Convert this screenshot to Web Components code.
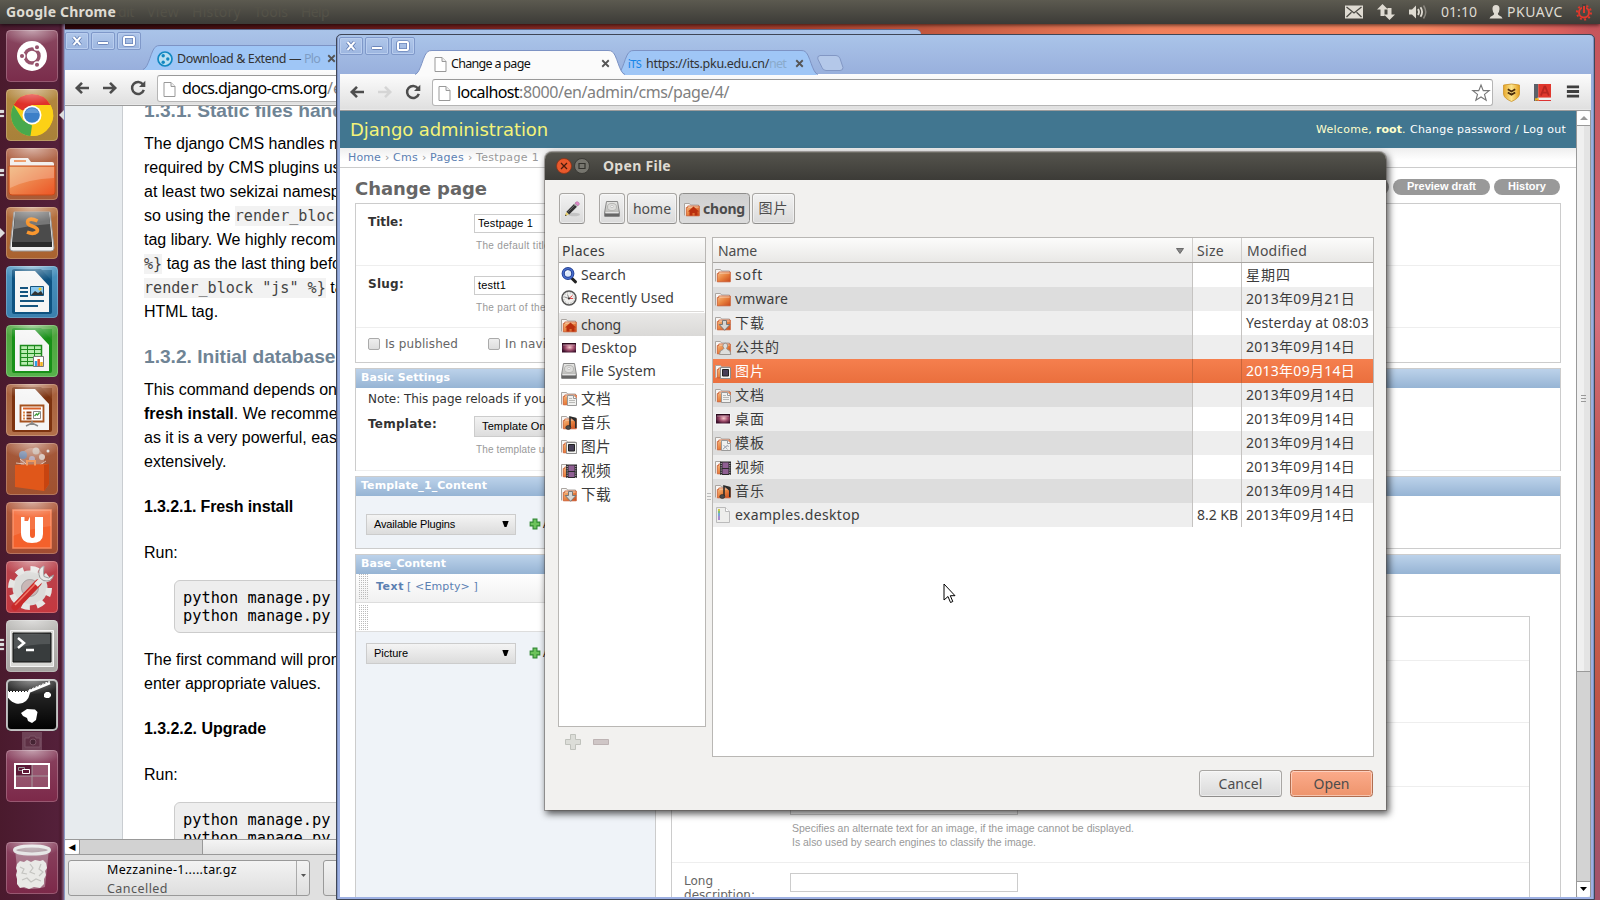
<!DOCTYPE html>
<html lang="en">
<head>
<meta charset="utf-8">
<title>Desktop</title>
<style>
html,body{margin:0;width:1600px;height:900px;overflow:hidden}
body{font-family:"Noto Sans","Noto Sans CJK SC",sans-serif}
</style>
</head>
<body>
<unity-desktop></unity-desktop>
<script>
const define = (name, css, html) => customElements.define(name, class extends HTMLElement {
  connectedCallback() {
    if (this.shadowRoot) return;
    this.attachShadow({mode: 'open'}).innerHTML =
      `<style>:host{display:block;box-sizing:border-box}*{box-sizing:border-box}${css}</style>${html(this)}`;
  }
});
/* text run spread to a given width: t(label, width) */
const t = (s, w, c = '') => `<fit-text w="${w}" class="${c}">${s}</fit-text>`;

/* ---------- small icons ---------- */
const fold = (o = '') => `<defs><linearGradient id="o" x1="0" y1="0" x2="1" y2="1"><stop offset="0" stop-color="#f6bd84"/><stop offset=".5" stop-color="#e8823f"/><stop offset="1" stop-color="#c9481b"/></linearGradient></defs>
<path d="M.5 14.500V2.500h5l1 1.500h8v9" fill="#f8f6f4" stroke="#aaa5a1"/><path d="M2.300 14.800V6.500h1.500V5H15.300V14.800z" fill="url(#o)" stroke="#c8562a" stroke-width=".8"/><path d="M4.200 6h10.500" stroke="#fff" stroke-opacity=".55"/>${o}`;
const page = '<path d="M3 1.500h7l4 4v10H3z" fill="#fff" stroke="#999"/><path d="M10 1.500v4h4" fill="#eee" stroke="#999"/>';
const disk = '<defs><linearGradient id="d" x2="0" y2="1"><stop offset="0" stop-color="#e8e8e6"/><stop offset="1" stop-color="#a9a9a6"/></linearGradient></defs><path d="M2.500.5h11l2 11.500v3q0 .5-.5.5H1q-.5 0-.5-.5V12z" fill="url(#d)" stroke="#888"/><ellipse cx="8" cy="6" rx="4.500" ry="3.600" fill="#dcdcda" stroke="#b6b6b4"/><circle cx="8" cy="5.500" r="1.200" fill="#fff" stroke="#aaa" stroke-width=".6"/><path d="M1 12.200h14v2.800H1z" fill="#666"/><path d="M1.500 11.800h13" stroke="#f5f5f5"/>';
const ICONS = {
  folder: fold(),
  home: fold('<path d="M4 10.500 9.500 5.500l5.500 5h-1.500V14.500h-2.800v-2.500H8.500v2.500H5.500V10.500z" fill="#b92f0e"/>'),
  docs: fold('<path d="M6.500 5.500h6l3 3v7h-9z" fill="#f0f0ee" stroke="#999"/><path d="M12.500 5.500v3h3" stroke="#999" fill="#fff"/><path d="M8 8.500h3M8 10.500h6M8 12.500h6" stroke="#b9b9b7"/>'),
  templ: fold('<path d="M6.500 5.500h6l3 3v7h-9z" fill="#f0f0ee" stroke="#999"/><path d="M12.500 5.500v3h3" stroke="#999" fill="#fff"/><path d="m8 14 5-4M8.500 10l4 4.500M8 14.500q3-5 6-3" stroke="#a8adb8" fill="none"/>'),
  music: fold('<path d="M9 13V3l5.800 1.500V14" fill="none" stroke="#2c2c2c" stroke-width="1.600"/><path d="M9 3l5.500 5V4.500z" fill="#2c2c2c"/><ellipse cx="7.300" cy="13.500" rx="2.500" ry="2" fill="#4a4a4a" stroke="#222" stroke-width=".6"/>'),
  pics: fold('<path d="M5.500 4.500h10v11h-10z" fill="#f4f4f2" stroke="#8c8c8c"/><path d="M7.500 6.500h6v6.500h-6z" fill="#473f57" stroke="#222"/>'),
  video: fold('<path d="M5 2.500h11v13.500H5z" fill="#2d2a2d"/><path d="M7.500 3.500h6v5.500h-6zM7.500 10h6v5h-6z" fill="#8f5f93"/><path d="M6.200 4v12M14.800 4v12" stroke="#ddd" stroke-width=".9" stroke-dasharray="1 1.200"/>'),
  down: fold('<path d="M7.500 5.500h4V9.500H15l-5.400 5.800L4.200 9.500h3.300z" fill="#d6d6d4" stroke="#777"/>'),
  pub: fold('<path d="M4.500 15.500q0-4.500 3.500-5l1-1.200Q7.500 8 8 6q.6-1.800 2.300-1.800T12.500 6q.4 2-1 3.300l.8 1.200q3.500.5 3.500 5z" fill="#dededc" stroke="#8a8a88" stroke-width=".8"/>'),
  desk: '<defs><radialGradient id="k" cx=".55" cy=".45" r=".6"><stop offset="0" stop-color="#f6c9cc"/><stop offset=".5" stop-color="#a4506f"/><stop offset="1" stop-color="#3a0f2a"/></radialGradient></defs><path d="M.5 2.500h15v11H.5z" fill="#fff" opacity=".8"/><path d="M1 3h14v9.500H1z" fill="url(#k)"/><path d="M1 3h14v1.300H1z" fill="#2c0a1c"/><path d="M2 5h12" stroke="#fff" stroke-opacity=".6" stroke-width=".7"/>',
  disk,
  file: '<path d="M1.500.5h9l4 4v11h-13z" fill="#eeeeec" stroke="#bbb"/><path d="M10.500.5v4h4" fill="#fff" stroke="#bbb"/><path d="M4 2v2" stroke="#c9c94a" stroke-width="2"/><path d="M4 4v2" stroke="#7ec07e" stroke-width="2"/><path d="M4 6v3" stroke="#7aa6d8" stroke-width="2"/><path d="M4 9v4" stroke="#a58bd0" stroke-width="2"/>',
  search: '<path d="m10.500 11 4 3.800" stroke="#222" stroke-width="3" stroke-linecap="round"/><circle cx="7" cy="6.500" r="4.800" fill="#dce8fa" stroke="#223f91" stroke-width="3.200"/><circle cx="7" cy="6.500" r="4.900" fill="none" stroke="#4a6fcf" stroke-width="1.400"/><path d="M4.500 6Q5 4 7.300 3.800" stroke="#fff" fill="none"/>',
  recent: '<circle cx="8" cy="8" r="7" fill="#f0f0ee" stroke="#555" stroke-width="1.500"/><circle cx="8" cy="8" r="5.300" fill="none" stroke="#999" stroke-dasharray="1 1.800"/><path d="M8 8.500 3.500 7M8 8.500l-1.500-4" stroke="#888" stroke-width="1"/><path d="m7.500 9 4-3.500M8 8.500h4" stroke="#d33" stroke-width=".9"/><circle cx="8" cy="8.500" r="1" fill="#333"/>',
  pencil: '<ellipse cx="10" cy="13.500" rx="6" ry="1.800" fill="#000" opacity=".13"/><path d="M1 15l1.200-4L5 13.500z" fill="#e9cf6a"/><path d="M1 15l.5-1.600 1.200 1z" fill="#222"/><path d="M2.400 10.800 10 3l3 2.800-7.800 7.800z" fill="#333"/><path d="m3.800 11 7.200-7" stroke="#6a6a6a"/><path d="m10 3 1-1 3 2.800-1 1z" fill="#b8b8b8"/><path d="m11 2 1.200-1q1.200-.8 2.400.4t.4 2.400l-1 1z" fill="#e08ac8" stroke="#a05a92" stroke-width=".5"/>',
  page,
  close: '<path d="m4 4 8 8m0-8-8 8" stroke="#555" stroke-width="2.200"/>',
  back: '<path d="M15 8H3M8 2.800 2.800 8 8 13.200" fill="none" stroke="#4d4d4d" stroke-width="2.600"/>',
  fwd: '<path d="M1 8h12M8 2.800 13.200 8 8 13.200" fill="none" stroke="#4d4d4d" stroke-width="2.600"/>',
  fwd0: '<path d="M1 8h12M8 2.800 13.200 8 8 13.200" fill="none" stroke="#d5d5d5" stroke-width="2.600"/>',
  reload: '<path d="M13 4.500A6 6 0 1 0 13.800 9.800" fill="none" stroke="#4d4d4d" stroke-width="2.500"/><path d="M15.300.8V7H9z" fill="#4d4d4d"/>',
  plone: '<circle cx="8" cy="8" r="7" fill="#b9dff2" stroke="#1288c2" stroke-width="1.700"/><circle cx="6.200" cy="4.800" r="1.700" fill="#1288c2"/><circle cx="10.800" cy="8" r="1.700" fill="#1288c2"/><circle cx="6.200" cy="11.200" r="1.700" fill="#1288c2"/>',
  add: '<path d="M5.800 2.500h4.400v3.300h3.300v4.400h-3.300v3.300H5.800v-3.300H2.500V5.800h3.300z" fill="#6cc35b" stroke="#328a34" stroke-width="1.300"/>',
  plus: '<path d="M5.500.5h5v5h5v5h-5v5h-5v-5h-5v-5h5z" fill="#dcddd8" stroke="#c0c2bc"/>',
  minus: '<path d="M.5 5.500h15v5H.5z" fill="#cfc6c6" stroke="#bdb3b3"/>',
  star: '<path d="m8 .9 2 5h5.300l-4.200 3.300 1.500 5.300L8 11.500l-4.600 3 1.500-5.300L.7 5.900H6z" fill="#fff" stroke="#777"/>',
  shield: '<defs><linearGradient id="s"><stop offset="0" stop-color="#e8a92c"/><stop offset=".5" stop-color="#fbe38c"/><stop offset="1" stop-color="#e59f1c"/></linearGradient></defs><path d="M.5 1Q8-1 15.500 1v8.500Q15 13.500 8 16.500.8 13.500.5 9.500z" fill="url(#s)" stroke="#c98d20" stroke-width=".7"/><path d="M4.500 5 8 7l3.500-2M4.500 8 8 10l3.500-2" fill="none" stroke="#4a2c0a" stroke-width="1.700"/>',
  book: '<path d="M0 0h4v16H0z" fill="#5b6168"/><path d="M4 0h12v13H4z" fill="#e0372d"/><path d="M3 13h13v2.500H3z" fill="#eee"/><path d="M3 15.500h13" stroke="#d33"/><path d="M1 13.500h3.500V16L3 15l-2 1z" fill="#f2b51d"/><path d="m6.500 11 3.300-8.500h.8L14 11M7.800 8.200h5" stroke="#b82620" stroke-width="1.700" fill="none"/>',
  menu: '<path d="M2 3h13M2 8h13M2 13h13" stroke="#3f3f3f" stroke-width="3"/>',
  mail: '<path d="M0 1.500h18v13H0z" fill="#dfdbd2"/><path d="m1.500 3 7.500 6 7.500-6M1.500 13l5-4.800M16.500 13l-5-4.800" fill="none" stroke="#4a4943" stroke-width="1.300"/>',
  net: '<path d="M5.500 0 11 5.500H7.500V12h-4V5.500H0zM12.500 16 7 10.500h3.500V4h4v6.500H18z" fill="#dfdbd2"/>',
  vol: '<path d="M0 5.500h3l4-4v13l-4-4H0z" fill="#dfdbd2"/><path d="M9 5q2 3 0 6M11.500 3.300q3.200 4.700 0 9.400" fill="none" stroke="#dfdbd2" stroke-width="1.800"/><path d="M14.500 1.500q4.500 6.500 0 13" fill="none" stroke="#8b8880" stroke-width="1.500"/>',
  user: '<path d="M7 0q3.800 0 3.800 4.200Q10.500 7.500 9 9q0 1.800 1.500 2.200 3 .8 3.500 3.300H0q.5-2.500 3.500-3.300Q5 10.800 5 9 3.500 7.500 3.200 4.200 3.200 0 7 0z" fill="#dfdbd2"/>',
  power: '<circle cx="8" cy="8.500" r="5" fill="none" stroke="#df382c" stroke-width="2"/><circle cx="8" cy="8.500" r="7" fill="none" stroke="#df382c" stroke-width="2" stroke-dasharray="2 2.400"/><path d="M6 0h4v6H6z" fill="#45443f"/><path d="M8 2v7" stroke="#df382c" stroke-width="2"/>',
};
define('ui-icon', 'svg{display:block;width:100%;height:100%;overflow:visible}', e => {
  const n = e.getAttribute('name'), w = +(e.getAttribute('w') || 16), h = +(e.getAttribute('h') || w);
  e.style.cssText += `;width:${w}px;height:${h}px;flex:none`;
  const vb = {mail: '0 0 18 16', net: '0 0 18 16', vol: '0 0 20 16', user: '0 0 14 15'}[n] || '0 0 16 16';
  return `<svg viewBox="${vb}" fill="none">${ICONS[n]}</svg>`;
});
const ic = (n, w = 16, c = '') => `<ui-icon name="${n}" w="${w}" class="${c}"></ui-icon>`;

/* ---------- top panel ---------- */
define('top-panel', `:host{height:24px;display:flex;align-items:center;background:linear-gradient(#5c5a50,#3c3b37);color:#dfdbd2;font-size:14px;line-height:24px;padding-left:6px;position:relative;z-index:1;box-shadow:0 1px 4px rgba(0,0,0,.7)}
.b{font-weight:700;font-size:14px}.m{color:#545248;margin-left:2px}.m+.m{margin-left:13px}.r{margin-left:auto;display:flex;align-items:center}`,
() => `${t('Google Chrome', 110, 'b')}${t('dit', 16, 'm')}${t('View', 32, 'm')}${t('History', 49, 'm')}${t('Tools', 34, 'm')}${t('Help', 28, 'm')}
<div class="r">${ic('mail', 18)}<ui-icon name="net" w="18" h="16" style="margin-left:14px"></ui-icon><ui-icon name="vol" w="20" h="16" style="margin-left:14px"></ui-icon>
<fit-text w="36" style="margin-left:12px">01:10</fit-text><ui-icon name="user" w="14" h="14" style="margin-left:12px"></ui-icon><fit-text w="56" style="margin:0 13px 0 4px">PKUAVC</fit-text><ui-icon name="power" w="16" style="margin-right:8px"></ui-icon></div>`);

/* ---------- launcher ---------- */
const officeDoc = (c, inner) => `<path d="M9 3h26l11 12v31q0 2-2 2H8q-2 0-2-2V5q0-2 3-2z" fill="${c}"/><path d="M9 5h20l14 15v26H9z" fill="#f5f5f5"/><path d="M33 4h13v13z" fill="${c}" opacity=".8"/>${inner}`;
const APPS = {
  dash: ['#8b4a62', '#7a2c4b', '<circle cx="26" cy="26" r="15" fill="#fff"/><circle cx="26" cy="26" r="7" fill="none" stroke="#96546d" stroke-width="3.500"/><g stroke="#fff" stroke-width="1.500"><circle cx="16" cy="26" r="2.800" fill="#96546d"/><circle cx="31" cy="17.300" r="2.800" fill="#96546d"/><circle cx="31" cy="34.700" r="2.800" fill="#96546d"/></g>'],
  chrome: ['#b3873f', '#a88139', '<circle cx="26" cy="26" r="21" fill="#fcd116"/><path d="M26 5A21 21 0 0 1 44.500 16H26L16.500 21.500 7.600 16Q13.500 5 26 5z" fill="#e0312a"/><path d="M7.600 16 16.900 31.300 26 36.500 24.500 47A21 21 0 0 1 7.600 16z" fill="#48a94c"/><path d="M26 16h18.600A21 21 0 0 1 24.500 47L35 31z" fill="#fcd116"/><circle cx="26" cy="26" r="9.500" fill="#fff"/><circle cx="26" cy="26" r="7.800" fill="#3c7fc8"/><path d="M19 24a7.500 7.500 0 0 1 14 0z" fill="#7cabe0" opacity=".6"/>'],
  files: ['#b3694d', '#a85a36', '<path d="M4 20V12q0-2 2-2h16l3 4h21q2 0 2 2v5z" fill="#f2f0ee"/><path d="M8 12h12v2H8z" fill="#ed9a68"/><path d="M3 18h46v26q0 3-3 3H6q-3 0-3-3z" fill="url(#g2)" stroke="#c94a18"/><path d="M4 19h44v11Q22 31 4 40z" fill="#fff" opacity=".22"/>'],
  sublime: ['#b5703f', '#a9622f', '<path d="M8 5h36l4 36q0 3-3 3H7q-3 0-3-3z" fill="#eee" stroke="#999"/><path d="M9 5h34l3 30H6z" fill="#4b4b4b"/><path d="M9 5h34l1 12Q26 18 8 22z" fill="#777"/><path d="M6 35h40v5H6z" fill="#2a2a2a"/><path d="M31.500 14q-7-3.500-9.500-.5-2 3.500 4 5.500 7 2.300 5 5.700-3.500 3.200-10 .5" fill="none" stroke="#f9972f" stroke-width="3.600"/>'],
  writer: ['#4a93bf', '#3a7fae', officeDoc('#0e5280', '<path d="M14 22h8M14 26h8M14 30h8M14 35h24M14 40h18" stroke="#15547f" stroke-width="2"/><path d="M24.500 20.500h13v9h-13z" fill="#8bc8ee" stroke="#15547f"/><path d="m25 29 4-4 3 2 3-2 2.500 4z" fill="#333"/><circle cx="34" cy="23" r="1.500" fill="#f5c518"/>')],
  calc: ['#4da23c', '#57b24b', officeDoc('#189018', '<path d="M14.500 20.500h21v20h-21z" fill="#b9ecb0" stroke="#1e8a1e" stroke-width="1.500"/><path d="M14.500 24.500h21M14.500 28.500h21M14.500 32.500h21M14.500 36.500h21M21.500 20v20M28.500 20v20" stroke="#1e8a1e"/><path d="M27.500 31.500h10v10h-10z" fill="#fff" stroke="#777"/><path d="M30 41v-5" stroke="#2d9fe8" stroke-width="2.500"/><path d="M32.700 41v-7" stroke="#e4572e" stroke-width="2.500"/><path d="M35.500 41v-4" stroke="#f0b41c" stroke-width="2.500"/>')],
  impress: ['#a65e3a', '#b2704a', officeDoc('#7c3310', '<path d="M14.500 21.500h23v16h-23z" fill="#fff" stroke="#a5521e" stroke-width="1.800"/><path d="M17 24.500h18" stroke="#d8622a" stroke-width="2"/><path d="M17 28.500h2M17 31.500h2M17 34.500h2" stroke="#e08a4a" stroke-width="2"/><path d="M20.500 28.500h5M20.500 31.500h5M20.500 34.500h5" stroke="#8a3a12" stroke-width="2"/><path d="M27.500 27.500h7v7h-7z" fill="#fff" stroke="#888"/><path d="m28.500 32 2-2 1 1 2-2.500" stroke="#3a9c3a" fill="none" stroke-width="1.300"/><path d="m20 42 6-3 6 3M26 37v4" stroke="#888" stroke-width="1.500" fill="none"/>')],
  center: ['#a5593b', '#a0512f', '<circle cx="26" cy="17" r="12" fill="#fff" opacity=".25"/><circle cx="17" cy="12" r="4" fill="#7c8fae"/><circle cx="30" cy="8" r="3.500" fill="#c9b5a9"/><circle cx="36" cy="14" r="3" fill="#d9c9c0"/><circle cx="26" cy="16" r="3" fill="#b9b0c0"/><circle cx="42" cy="8" r="1.500" fill="#ddd"/><path d="M10 20l8 1M40 18l-6 4M14 16l6 5" stroke="#fff" stroke-opacity=".6"/><path d="M9 22 43 21v20l-5 7-29-4z" fill="#e0571a"/><path d="m38 22 5-1v20l-5 7z" fill="#c74410"/><path d="M21 22.500v-4.500h8v4.500" fill="none" stroke="#f39a5c" stroke-width="2"/>'],
  one: ['#b05a3c', '#a24d32', '<path d="M7 8h38v38H7z" fill="#f4612c" stroke="#f9885c" stroke-width="1.500"/><path d="M7 8h38v16Q25 26 7 34z" fill="#fff" opacity=".12"/><path d="M15 15h9v18q0 3 2.500 3t2.500-3V15h8v17q0 9-11 9-11 0-11-10z" fill="#fff"/><path d="M18.500 14.500h5.500l-2 4.500h-3.500z" fill="#f4703f"/>'],
  settings: ['#b8444e', '#c4383f', '<circle cx="24" cy="27" r="13" fill="none" stroke="#dcdcda" stroke-width="9"/><circle cx="24" cy="27" r="19" fill="none" stroke="#e6e6e4" stroke-width="6" stroke-dasharray="8 6.900"/><circle cx="24" cy="27" r="8.500" fill="#c9b7b6" stroke="#aaa"/><path d="M9 46 32 22" stroke="#c92a2a" stroke-width="7" stroke-linecap="round"/><path d="M9 44 30 22" stroke="#f07a6a" stroke-width="1.500"/><path d="M30 24 37 17" stroke="#e8e8e6" stroke-width="5"/><path d="M38 5q-6 2-5 8.500T41 20q5 0 6.500-6l-5 3-4.500-1.500-.5-4.500z" fill="#e8e8e6" stroke="#999"/>'],
  term: ['#bdbcb9', '#a7a5a2', '<path d="M4.500 10.500h43v36h-43z" fill="#d9d9d6" stroke="#f4f4f4"/><path d="M7 13h38v29H7z" fill="#383c3d" stroke="#111"/><path d="M8 14h36v10Q24 24 8 29z" fill="#fff" opacity=".13"/><path d="m12 18 6 5-6 5" fill="none" stroke="#fff" stroke-width="2.500"/><path d="M20 30h8" stroke="#fff" stroke-width="2.500"/>'],
  cave: ['#333', '#000', '<path d="M2 12h21l1 2q-1 5-4 8-4 3.500-10 2.500-5-1.500-8-6z" fill="#fff"/><path d="M3 12.500h20" stroke="#000" stroke-width="1" stroke-dasharray="1 2"/><path d="m22 13 22-9" stroke="#fff" stroke-width="2.500"/><path d="m23 11 21-9" stroke="#fff" stroke-width="1" stroke-dasharray="2 1.500"/><path d="M38 15l2-2h3l2 2v2l-2 2h-3l-2-1zM15 34l6-4 8 .5 2.500 2.500-1.500 8-4 3-4-2-1-3-4-2z" fill="#fff"/><rect x="1" y="1" width="50" height="50" rx="4" fill="none" stroke="#b4b4b4" stroke-width="2"/>'],
  spaces: ['#8a4360', '#7c2949', '<path d="M9 14h34v24H9z" fill="#fff" fill-opacity=".15"/><path d="M9 14h17v12H9z" fill="#5e1a38"/><path d="M26 15v22M10 26h32" stroke="#a59a9e"/><path d="M12.500 17.500h6v3h-6z" stroke="#999" fill="none"/><path d="M16.500 19.500h7v4h-7z" fill="#5e1a38" stroke="#fff"/><path d="M9 14h34v24H9z" fill="none" stroke="#fff" stroke-width="2"/>'],
  trash: ['#8a4360', '#7c2949', '<path d="M9 7h34l-4 38q-13 4-26 0z" fill="#d8c8cf" opacity=".45"/><ellipse cx="26" cy="8" rx="17.500" ry="4" fill="#a9959d" stroke="#e3e3e3" stroke-width="3"/><path d="M11 22l3-3 4 1 3-2 4 2 4-2 5 1 3-1 3 3 1 5-2 3 1 4-2 4v5l-4 4-6-1-5 2-5-2-4 1-3-4v-5l-1-4 1-4-1-3z" fill="#e9e9e6"/><path d="m14 25 4 2-2 4 5 1M24 22l3 4-3 4 5 2M35 22l-2 5 4 3-4 4M16 38l5-2 4 4 5-3 5 2" stroke="#c4c4c0" fill="none" stroke-width="1.200"/>'],
};
define('launcher-tile', `:host{width:52px;height:52px;flex:none;position:relative}svg{display:block}
.p{position:absolute;left:-6px;width:4px;height:2.500px;background:#ddd;border-radius:0 1px 1px 0;box-shadow:0 0 1px #fff}.tr{position:absolute;left:-6px;top:21px;border:5px solid transparent;border-left:5px solid #ddd;border-right:0}.now{position:absolute;left:53px;top:21px;border:5px solid transparent;border-right:5px solid #ddd;border-left:0}`,
e => {
  const [a, b, g] = APPS[e.getAttribute('app')], n = +e.getAttribute('pips') || 0;
  let p = '';
  if (n === 1) p = '<i class="tr"></i>';
  else for (let i = 0; i < n; i++) p += `<i class="p" style="top:${26.500 - n * 2.250 + i * 4.500 - 1}px"></i>`;
  if (e.hasAttribute('now')) p += '<i class="now"></i>';
  return `<svg width="52" height="52" viewBox="0 0 52 52"><defs><linearGradient id="g" x2="0" y2="1"><stop offset="0" stop-color="${a}"/><stop offset="1" stop-color="${b}"/></linearGradient><linearGradient id="g2" x2="1" y2="1"><stop offset="0" stop-color="#efb070"/><stop offset="1" stop-color="#ec5424"/></linearGradient><radialGradient id="h" cx=".5" cy="0" r=".6"><stop offset="0" stop-color="#fff" stop-opacity=".5"/><stop offset="1" stop-color="#fff" stop-opacity="0"/></radialGradient></defs>
<rect width="52" height="52" rx="4.500" fill="url(#g)"/>${g}<rect width="52" height="26" rx="4.500" fill="url(#h)"/><rect x=".5" y=".5" width="51" height="51" rx="4" fill="none" stroke="#fff" stroke-opacity=".22"/></svg>${p}`;
});
define('unity-launcher', `:host{width:65px;height:876px;background:linear-gradient(90deg,#4a1a2d,#54203a 58px,#4b1a2f 61px,#7b4f6b 63px,#8a86b0);display:flex;flex-direction:column;padding:6px 0 0 6px;gap:7px}.cam{margin:-6px 0 -8px 16px;width:20px;height:19px;opacity:.35;display:block}.end{margin-top:33px}`,
() => `${[['dash'], ['chrome', 'pips="2" now'], ['files', 'pips="2"'], ['sublime', 'pips="1"'], ['writer'], ['calc'], ['impress'], ['center'], ['one'], ['settings'], ['term', 'pips="3"'], ['cave']].map(([a, x = '']) => `<launcher-tile app="${a}" ${x}></launcher-tile>`).join('')}
<svg class="cam" viewBox="0 0 20 19"><path d="M0 0h20v19H0z" fill="#a98a98"/><path d="M3 6h4l1-2h5l1 2h4v9H3z" fill="#7b5566" stroke="#c9b5bd"/><circle cx="11" cy="10" r="3" fill="#333" stroke="#c9b5bd"/></svg>
<launcher-tile app="spaces"></launcher-tile><launcher-tile app="trash" class="end"></launcher-tile>`);

/* ---------- browser chrome ---------- */
define('window-buttons', `:host{display:flex;gap:2px}i{width:24px;height:18px;border:1px solid #7f98c9;border-radius:2px;background:linear-gradient(#b0c7ea,#9db6e0);box-shadow:inset 0 0 0 1px #b9cdee}svg{display:block}`,
() => ['<path d="m7.500 4 7 8m0-8-7 8" stroke="#5c77ad" stroke-width="3.500"/><path d="m7.500 4 7 8m0-8-7 8" stroke="#fff" stroke-width="2"/>', '<rect x="5.500" y="8.500" width="11" height="3" rx="1" fill="#fff" stroke="#6c86bb"/>', '<rect x="6" y="4" width="10" height="8" rx="1.500" fill="none" stroke="#6c86bb" stroke-width="3.600"/><rect x="6" y="4" width="10" height="8" rx="1" fill="none" stroke="#fff" stroke-width="2"/>'].map(p => `<i><svg width="22" height="16" fill="none">${p}</svg></i>`).join(''));

define('browser-tab', `:host{height:25px;position:relative;display:flex;align-items:center;font-size:12.500px;line-height:20px;color:var(--ink,#333);padding-left:var(--pad,28px)}
svg{position:absolute;inset:0;width:100%;height:100%;overflow:visible}slot{display:flex;align-items:center}.in{position:relative;display:flex;align-items:center;width:100%;padding-top:2px}`,
e => { const w = +e.getAttribute('w'), f = e.hasAttribute('active') ? '#fbfbfb' : '#9fc6f6'; e.style.width = w + 'px';
  return `<svg viewBox="0 0 ${w} 25" preserveAspectRatio="none"><path d="M0 25C6 23 8 4 13 1.500q1-1 4-1H${w - 17}q3 0 4 1C${w - 8} 4 ${w - 6} 23 ${w} 25z" fill="${f}"/><path d="M0 24.500C6 23 8 4 13 1.500q1-1 4-1H${w - 17}q3 0 4 1C${w - 8} 4 ${w - 6} 23 ${w} 24.500" fill="none" stroke="#7d93c4"/></svg><div class="in"><slot></slot></div>`; });

define('tool-bar', `:host{height:37px;background:linear-gradient(#fcfcfc,#dfdfdf);border-bottom:1px solid #9c9c9c;box-shadow:inset 0 -1px #e8e8e8;display:flex;padding:5px 0 0 0;font-size:16px}
.nav{display:flex;gap:12px;padding:5px 0 0 9px;width:92px;flex:none}.box{height:27px;width:var(--box,1061px);flex:none;background:#fff;border:1px solid #b5b5b5;border-top-color:#999;border-radius:3px;display:flex;align-items:center;line-height:25px;padding-left:3px;gap:5px;color:#808080}.star{margin:0 2px 0 auto}.ext{display:flex;gap:14px;padding:5px 0 0 10px}`,
e => `<div class="nav">${ic('back')}${ic(e.hasAttribute('nofwd') ? 'fwd0' : 'fwd')}${ic('reload')}</div><div class="box">${ic('page', 16)}<slot></slot>${e.hasAttribute('ext') ? ic('star', 18, 'star') : ''}</div>${e.hasAttribute('ext') ? `<div class="ext">${ic('shield', 17)}${ic('book', 17)}${ic('menu', 15)}</div>` : ''}`);

/* ---------- documentation window ---------- */
define('docs-page', `:host{display:flex;height:733px;overflow:hidden;background:#fff;font:16px/24px "Liberation Sans",sans-serif;color:#000;white-space:nowrap}
.g{width:58px;flex:none;background:#e7ebee;border-right:1px solid #c9cdd1}.c{padding-left:21px;margin-top:-7px}
h2{font-size:19.150px;line-height:24px;margin:0;color:#6f8495}p{margin:0}h3{font-size:16px;line-height:24px;margin:0}
code{font:15.100px "DejaVu Sans Mono",monospace;background:#f2f2f2;color:#444;padding:1px 0}
pre{font:15.300px/18px "DejaVu Sans Mono",monospace;margin:0 0 0 30px;background:#eee;border:1px solid #ccc;border-radius:6px;padding:8px;height:53px;width:500px}`,
() => `<div class="g"></div><div class="c">
<h2>1.3.1. Static files hand</h2>
<p style="margin-top:9px">The django CMS handles m<br>required by CMS plugins us<br>at least two sekizai namesp<br>so using the <code>render_block</code><br>tag libary. We highly recom<br><code>%}</code> tag as the last thing befo<br><code>render_block "js" %}</code> ta<br>HTML tag.</p>
<h2 style="margin-top:21px">1.3.2. Initial database</h2>
<p style="margin-top:9px">This command depends on<br><b>fresh install</b>. We recommen<br>as it is a very powerful, easy<br>extensively.</p>
<h3 style="margin-top:21px">${t('1.3.2.1. Fresh install', 149)}</h3>
<p style="margin-top:22px">Run:</p>
<pre style="margin-top:15px">python manage.py
python manage.py</pre>
<p style="margin-top:15px">The first command will prom<br>enter appropriate values.</p>
<h3 style="margin-top:21px">${t('1.3.2.2. Upgrade', 122)}</h3>
<p style="margin-top:22px">Run:</p>
<pre style="margin-top:15px">python manage.py
python manage.py</pre></div>`);

define('docs-window', `:host{width:857px;height:871px;background:linear-gradient(#aac4e9,#98afdc 40px);border-top:1px solid #5d6c92;border-left:1px solid #8a99c4;border-radius:0 5px 0 0;overflow:hidden}
.t{height:40px;display:flex;padding:2px 0 0 0}browser-tab{margin:13px 0 0 2px;--pad:14px}.fade{color:#7d9cc4}
.u{color:#000}.sb{height:16px;display:flex;background:linear-gradient(#f4f4f4,#e4e4e4);border-top:1px solid #999;border-bottom:1px solid #999}.sb b{width:14px;background:#fff;border-radius:3px;font:9px/14px "DejaVu Sans";text-align:center}.sb i{width:124px;background:#d2d2d2;border:solid #999;border-width:0 1px}
.dl{height:46px;background:#e0e0e0;display:flex;gap:13px;padding:5px 3px;font-size:12.500px;line-height:18px}.it{width:242px;height:36px;border:1px solid #999;border-radius:3px;background:linear-gradient(#f3f3f3,#dedede);display:flex}.tx{padding-left:38px;width:228px;border-right:1px solid #aaa;display:flex;flex-direction:column;line-height:18.500px}.tx .g{color:#555}.it svg{margin:13px 0 0 4px}`,
() => `<div class="t"><window-buttons></window-buttons><browser-tab w="220">${ic('plone')}<fit-text w="124" style="margin-left:4px">Download &amp; Extend —</fit-text><fit-text w="16" class="fade" style="margin-left:3px">Plo</fit-text><ui-icon name="close" w="13" style="margin-left:5px"></ui-icon></browser-tab></div>
<tool-bar style="height:36px">${t('docs.django-cms.org', 145, 'u')}<span style="margin-left:-5px">/en</span></tool-bar><docs-page></docs-page>
<div class="sb"><b>◀</b><i></i></div><div class="dl"><div class="it"><div class="tx">${t('Mezzanine-1.....tar.gz', 130)}${t('Cancelled', 61, 'g')}</div><svg width="6" height="4"><path d="M0 0h5L2.500 3z" fill="#555"/></svg></div><div class="it"></div></div>`);

/* ---------- admin page ---------- */
define('admin-module', `:host{border:1px solid #ccc;margin-bottom:5px;background:#fff}h2{margin:0;height:19px;background:linear-gradient(#bcd2ea,#96b4d4);color:#fff;font-size:11px;line-height:17px;padding-left:5px;display:flex}`,
e => (e.getAttribute('head') ? `<h2>${t(e.getAttribute('head'), e.getAttribute('hw'))}</h2>` : '') + '<slot></slot>');
define('form-row', `:host{display:flex;border-bottom:1px solid #eee;height:62px;padding:10px 0 0 12px}
.l{width:106px;font-size:12px;line-height:18px;font-weight:700;color:#333;margin-top:-1px}.i{display:block;width:250px;height:19px;border:1px solid #ccc;font:11px/17px "Liberation Sans",sans-serif;color:#000;padding-left:3px}.sel{height:21px;background:linear-gradient(#f2f2f2,#ddd);line-height:19px;padding-left:7px}.h{font:10px/14px "Liberation Sans",sans-serif;color:#999;padding:6px 0 0 2px;display:block}`,
e => { const g = n => e.getAttribute(n); return `<div class="l">${t(g('label'), g('lw'))}</div><div><span class="i ${g('kind') || ''}">${t(g('value'), g('vw'))}</span><span class="h">${t(g('help'), g('hw'))}</span></div>`; });
define('plugin-select', `:host{display:flex;align-items:center;font:11px "Liberation Sans",sans-serif;height:21px}.s{width:150px;height:21px;border:1px solid #ccc;background:linear-gradient(#f4f4f4,#dcdcdc);padding:0 6px 0 7px;line-height:19px;display:flex;justify-content:space-between}.a{font:10px "DejaVu Sans"}ui-icon{margin:0 1px 2px 12px}svg{margin-top:6px}`,
e => `<div class="s">${t(e.getAttribute('label'), e.getAttribute('lw'))}<svg width="7" height="7"><path d="M.3 0h6.400L4.500 6h-2z" fill="#000"/></svg></div>${ic('add', 14)}<span class="a">Add</span>`);

define('admin-page', `:host{width:1236px;height:786px;overflow:hidden;background:#fff;font:11px "DejaVu Sans",sans-serif;position:relative}
.hd{height:37px;background:#417690;display:flex;justify-content:space-between;align-items:center;padding:0 10px 0 10px;color:#ffc}.hd .n{font-size:18px;color:#f4f379}.w{color:#fff}.hd span{display:flex;align-items:baseline}.hd b{margin-left:4px}.dot{margin:0 4px 0 0}.sl{margin:0 4px}
.bc{height:20px;border-bottom:1px solid #ccc;background:linear-gradient(#eee,#fff 12px);display:flex;gap:4px;align-items:baseline;padding:3px 0 0 8px;color:#999;line-height:13px}.bc a{color:#5b80b2}.bc s{text-decoration:none;width:4px}
.main{padding:10px 15px 0 15px}.top{display:flex;justify-content:space-between;height:25px;color:#666}.top b{font-size:18px;line-height:21px}.top div{display:flex;gap:4px;padding-top:1px}.top u{text-decoration:none;height:16px;border-radius:8px;background:#999;color:#fff;font:700 11px/15px "Liberation Sans";display:flex;justify-content:center}
.ck{height:33px;display:flex;padding:9px 0 0 12px;color:#666;font-size:12px;line-height:14px}.ck i{width:12px;height:12px;border:1px solid #aaa;border-radius:2px;background:linear-gradient(#eee,#ddd);margin:1px 5px 0 0}
.note{padding:2px 0 0 12px;color:#333;font-size:12px;line-height:18px;height:21px}.side{background:#eff3f8;border-right:1px solid #ccc;width:300px}
.base{display:flex;height:400px}.base .side{width:300px;flex:none}.pl{height:29px;border-bottom:1px solid #ddd;background:linear-gradient(#fff,#f1f1f1);display:flex;color:#5b80b2;align-items:center;padding:0 0 3px 2px}.pl+.pl{background:#fff;padding:0 0 0 2px}.grip{width:10px;height:25px;background:conic-gradient(#bbb 25%,transparent 0) 0 0/2px 2px;margin-right:8px;flex:none}
.box{margin:42px 30px 0 15px;border:1px solid #ccc;flex:1;border-bottom:0}.box i{display:block;border-bottom:1px solid #eee}.lr{display:flex;padding:10px 0 0 12px;color:#666;font-size:12px;line-height:14px}.lr span{width:106px;padding-top:1px}.in{width:228px;height:19px;border:1px solid #ccc}.help{font:10.500px/14px "Liberation Sans";color:#999;padding:0 0 0 120px;display:flex;flex-direction:column;height:76px;border-bottom:1px solid #eee}.help .in{margin:9px 0 6px -2px;flex:none}`,
() => `<div class="hd">${t('Django administration', 198, 'n')}<span>${t('Welcome,', 56)}<b>${t('root', 26)}</b><fit-text w="4" class="dot">.</fit-text>${t('Change password', 101, 'w')}<fit-text w="4" class="sl">/</fit-text>${t('Log out', 43, 'w')}</span></div>
<div class="bc"><a>${t('Home', 33)}</a><s>›</s><a>${t('Cms', 25)}</a><s>›</s><a>${t('Pages', 34)}</a><s>›</s>${t('Testpage 1', 63)}</div>
<div class="main"><div class="top"><b>${t('Change page', 132)}</b><div><u style="width:97px"></u><u style="width:97px">${t('Preview draft', 69)}</u><u style="width:66px;margin-right:1px">${t('History', 38)}</u></div></div>
<admin-module style="height:160px"><form-row label="Title:" lw="35" value="Testpage 1" vw="55" help="The default title" hw="74"></form-row><form-row label="Slug:" lw="36" value="testt1" vw="28" help="The part of the title" hw="90"></form-row>
<div class="ck"><i></i>${t('Is published', 73)}<i style="margin-left:30px"></i>${t('In navigation', 80)}</div></admin-module>
<admin-module head="Basic Settings" hw="89" style="height:103px"><div class="note">${t('Note: This page reloads if you', 178)}</div><form-row style="padding-top:7px" kind="sel" label="Template:" lw="69" value="Template One" vw="70" help="The template used" hw="85"></form-row></admin-module>
<admin-module head="Template_1_Content" hw="126" style="height:73px"><div class="side" style="height:52px;padding:18px 0 0 10px"><plugin-select label="Available Plugins" lw="81"></plugin-select></div></admin-module>
<admin-module head="Base_Content" hw="85"><div class="base"><div class="side"><div class="pl"><i class="grip"></i><b>${t('Text', 28)}</b><fit-text w="71" style="margin-left:3px">[ &lt;Empty&gt; ]</fit-text></div><div class="pl"><i class="grip"></i></div><plugin-select style="margin:11px 0 0 10px" label="Picture" lw="34"></plugin-select></div>
<div class="box"><i style="height:44px"></i><i style="height:62px"></i><i style="height:64px"></i><div class="help"><div class="in"></div>${t('Specifies an alternate text for an image, if the image cannot be displayed.', 342)}${t('Is also used by search engines to classify the image.', 244)}</div><div class="lr"><span>${t('Long', 29)}<br>${t('description:', 71)}</span><div class="in"></div></div></div></div></admin-module></div>`);

define('scroll-bar', `:host{width:15px;display:flex;flex-direction:column;border-left:1px solid #999;border-right:1px solid #999;background:linear-gradient(90deg,#f0f0f0 50%,#e4e4e4 50%)}.a{height:15px;background:#fff;border:0 solid #999;display:flex;align-items:center;justify-content:center}.top{border-bottom-width:1px;border-radius:3px 3px 0 0}.th{height:545px;display:flex;flex-direction:column;justify-content:center;gap:2px;align-items:center}.th i{width:5px;height:1px;background:#999}.rest{flex:1;background:#d3d3d3;border:solid #999;border-width:1px 0}`,
() => `<div class="a top"><svg width="8" height="4"><path d="M0 4h8L4 0z" fill="#999"/></svg></div><div class="th"><i></i><i></i><i></i></div><div class="rest"></div><div class="a" style="border-radius:0 0 3px 3px"><svg width="8" height="5"><path d="M0 0h7L3.500 4z" fill="#000"/></svg></div>`);

define('admin-window', `:host{width:1259px;height:866px;background:linear-gradient(#aac4e9,#98afdc 40px,#9db0e3);border:1px solid #3f4656;border-radius:5px 5px 0 0;padding:0 3px 3px;box-shadow:inset 1px 0 #8094c4,inset -1px 0 #8094c4;overflow:hidden}
.t{height:39px;display:flex;padding-top:2px;margin-left:-1px}.t>browser-tab{margin-top:13px}.nt{margin:18px 0 0 -1px}.c{display:flex}.k{color:#000}.fade{color:#8aaacb}.its{font-size:11px;color:#1585e8;font-family:Lato}`,
() => `<div class="t"><window-buttons></window-buttons><browser-tab active w="210" style="--ink:#111;--pad:17px;z-index:1">${ic('page')}<fit-text w="79" style="margin-left:3px">Change a page</fit-text><ui-icon name="close" w="13" style="margin-left:69px"></ui-icon></browser-tab>
<browser-tab w="201" style="--pad:11px;margin-left:-8px">${t('iTS', 13, 'its')}<fit-text w="123" style="margin-left:5px">https://its.pku.edu.cn/</fit-text>${t('net', 17, 'fade')}<ui-icon name="close" w="13" style="margin-left:7px"></ui-icon></browser-tab>
<svg class="nt" width="27" height="17"><path d="M3 .5h16q3 0 4 3l3 9q0 3-3 3H9q-3 0-4-3L.8 4q-.8-3 2.200-3.500z" fill="#b4c8e9" stroke="#8297c4"/></svg></div>
<tool-bar nofwd ext>${t('localhost', 62, 'k')}<fit-text w="210" style="margin-left:-5px">:8000/en/admin/cms/page/4/</fit-text></tool-bar><div class="c"><admin-page></admin-page><scroll-bar></scroll-bar></div>`);

/* ---------- open-file dialog ---------- */
define('gtk-button', `:host{display:flex;align-items:center;justify-content:center;gap:3px;height:31px;border:1px solid #a9a7a4;border-bottom-color:#8f8e8c;border-radius:3.500px;background:linear-gradient(#f2f2f2,#dadada);box-shadow:inset 0 0 0 1px rgba(255,255,255,.45);font-size:14px;line-height:20px;color:#4c4c4c}:host([on]){background:linear-gradient(#d0d0d0,#dcdcdc);border-color:#8f8e8c;font-weight:700;box-shadow:none;padding-top:1px}:host([go]){background:linear-gradient(#fbab8b,#ee946c);border-color:#b06d50}:host([cj]){padding-bottom:2px}`, () => '<slot></slot>');
const PL = [['search', 'Search', 45, 23], ['recent', 'Recently Used', 93, 23], 0, ['home', 'chong', 40, 23, 1], ['desk', 'Desktop', 56, 23], ['disk', 'File System', 75, 23], 0, ['docs', '文档', 30, 24], ['music', '音乐', 30, 24], ['pics', '图片', 30, 24], ['video', '视频', 30, 24], ['down', '下载', 30, 24]];
define('places-list', `:host{width:148px;height:490px;border:1px solid #b9b7b4;background:#fff;font-size:14px;color:#3c3c3c}.h{height:25px;border-bottom:1px solid #a8a5a1;background:linear-gradient(#fcfcfb,#e9e8e6);line-height:25px;padding-left:3px}.r{display:flex;align-items:center;padding-left:2px;gap:4px}.cj{font-size:14.670px}.cj fit-text{margin-top:-2px}.on{background:linear-gradient(#e9e8e7,#dad9d7)}.s{height:4px;padding-top:2px}.s i{display:block;margin:0 1px;border-top:1px solid #dcdad8}`,
() => `<div class="h">${t('Places', 43)}</div>${PL.map(p => p ? `<div class="r ${p[4] ? 'on' : ''} ${p[3] === 24 ? 'cj' : ''}" style="height:${p[3]}px">${ic(p[0])}${t(p[1], p[2])}</div>` : '<div class="s"><i></i></div>').join('')}`);
const D = ['2013年09月14日', 109];
const FILES = [['folder', 'soft', 28, '星期四', 45], ['folder', 'vmware', 53, '2013年09月21日', 109], ['down', '下载', 30, 'Yesterday at 08:03', 123], ['pub', '公共的', 45, ...D], ['pics', '图片', 30, ...D], ['docs', '文档', 30, ...D], ['desk', '桌面', 30, ...D], ['templ', '模板', 30, ...D], ['video', '视频', 30, ...D], ['music', '音乐', 30, ...D], ['file', 'examples.desktop', 125, ...D]];
define('file-list', `:host{width:662px;height:520px;border:1px solid #b9b7b4;background:#fff;font-size:14px;color:#3c3c3c}.r{display:grid;grid-template-columns:480px 49px 1fr;height:24px}.r>*{display:flex;align-items:center;padding-left:4px;border-right:1px solid #c5c3c1}.r>:last-child{border:0}.r:not(.h) fit-text{margin-top:-2px}.h{height:25px;border-bottom:1px solid #a8a5a1;background:linear-gradient(#fcfcfb,#e9e8e6);color:#4c4c4c}.h>*{border-color:#d0cecb}.h>:first-child{justify-content:space-between;padding:0 8px 0 5px}.h svg{margin-top:2px}
.r .n{background:#eee;padding-left:2px;gap:4px}.e>*{background:#eee}.e .n{background:#ddd}.on>*,.on .n{background:linear-gradient(#f57f4e,#ea6f3d);color:#fff;border-color:#c9653a}`,
() => `<div class="r h"><span>${t('Name', 39)}<svg width="8" height="6"><path d="M.5.5h7L4 5.500z" fill="#888" stroke="#555" stroke-width=".8"/></svg></span><span>${t('Size', 27)}</span><span style="padding-left:5px">${t('Modified', 60)}</span></div>${FILES.map((f, i) => `<div class="r ${i === 4 ? 'on' : i % 2 ? 'e' : ''}"><span class="n">${ic(f[0])}${t(f[1], f[2])}</span><span>${f[0] === 'file' ? t('8.2 KB', 41) : ''}</span><span>${t(f[3], f[4])}</span></div>`).join('')}`);
define('open-dialog', `:host{width:841px;height:658px;border-radius:7px 7px 0 0;background:#f2f1ef;box-shadow:0 0 0 1px rgba(90,85,80,.45),2px 3px 7px 1px rgba(0,0,0,.65)}
.t{height:28px;border-radius:7px 7px 0 0;background:linear-gradient(#55544d,#3c3b37);box-shadow:inset 0 1px #6b6a62;display:flex;align-items:center;gap:2px;padding:0 0 1px 11px;color:#dfdbd2;font-weight:700;font-size:14px;line-height:18px}.t svg{display:block}
.p{display:flex;gap:2px;padding:13px 0 0 14px}.m{display:flex;padding:13px 0 0 13px}.sp{width:6px;padding-top:256px;display:flex;flex-direction:column;gap:2px;align-items:center}.sp i{width:4px;height:1px;background:#bbb}.l{width:148px}.pm{display:flex;gap:12px;padding:7px 0 0 7px}.b{display:flex;gap:8px;justify-content:flex-end;padding:13px 13px 0 0}.b gtk-button{width:83px;height:27px}`,
() => `<div class="t"><svg width="16" height="16"><circle cx="8" cy="8" r="7.500" fill="#e9592c" stroke="#8a3216" stroke-width=".8"/><path d="m5 5 6 6m0-6-6 6" stroke="#4a1c0c" stroke-width="1.300"/></svg><svg width="16" height="16"><circle cx="8" cy="8" r="7.500" fill="#76756e" stroke="#33322e" stroke-width=".8"/><path d="M5 5.500h6v5H5z" fill="none" stroke="#33322e" stroke-width="1.200"/></svg><fit-text w="68" style="margin-left:11px">Open File</fit-text></div>
<div class="p"><gtk-button style="width:26px;margin-right:12px">${ic('pencil')}</gtk-button><gtk-button style="width:26px">${ic('disk')}</gtk-button><gtk-button style="width:50px">${t('home', 38)}</gtk-button><gtk-button on style="width:71px">${ic('home')}${t('chong', 42)}</gtk-button><gtk-button cj style="width:43px">${t('图片', 30)}</gtk-button></div>
<div class="m"><div class="l"><places-list></places-list><div class="pm">${ic('plus')}${ic('minus')}</div></div><div class="sp"><i></i><i></i><i></i></div><file-list></file-list></div>
<div class="b"><gtk-button>${t('Cancel', 44)}</gtk-button><gtk-button go>${t('Open', 36)}</gtk-button></div>`);

/* ---------- desktop: free-floating windows ---------- */
define('unity-desktop', `:host{width:1600px;height:900px;position:relative;overflow:hidden;background:linear-gradient(90deg,#2b070b 64px,#6e1c1c 420px,#a8402e 800px,#f0805c 1150px,#fa8862 1420px,#d9605c 1560px,transparent 1590px) 0 0/100% 40px no-repeat,linear-gradient(#c65358,#c85f68 150px,#d56f7c 320px,#c25a58 450px,#cc6450 570px,#bf5547 700px,#a3536a 860px)}
.w{position:absolute}`,
() => `<top-panel></top-panel><docs-window class="w" style="left:64px;top:29px"></docs-window><unity-launcher></unity-launcher><admin-window class="w" style="left:336px;top:34px"></admin-window><open-dialog class="w" style="left:545px;top:152px"></open-dialog>
<svg class="w" style="left:943px;top:583px" width="13" height="21"><path d="M1 1v16l4-3.500 2.500 6 2.300-1-2.500-5.800H12z" fill="#fff" stroke="#000"/></svg>`);

/* spreads its letters so the run fills the width given in "w" */
customElements.define('fit-text', class extends HTMLElement {
  connectedCallback() {
    if (this.shadowRoot) return;
    this.attachShadow({mode: 'open'}).innerHTML = '<style>:host{display:inline-block;white-space:pre;flex:none}</style><span><slot></slot></span>';
    const w = +this.getAttribute('w'), s = this.shadowRoot.querySelector('span'), n = [...this.textContent].length;
    s.style.letterSpacing = ((w - s.getBoundingClientRect().width) / n).toFixed(3) + 'px';
    this.style.width = w + 'px';
  }
});
</script>
</body>
</html>
